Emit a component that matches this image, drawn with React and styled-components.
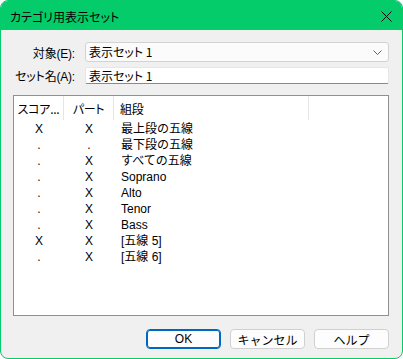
import React from "react";
import styled, { createGlobalStyle } from "styled-components";

const Global = createGlobalStyle`
  html, body { margin: 0; padding: 0; background: #ffffff; }
  body {
    font-family: "Liberation Sans", "Noto Sans CJK JP", sans-serif;
    font-size: 12px;
    color: #000;
  }
  * { box-sizing: border-box; }
`;

const GREEN = "#05cc6b";

const Window = styled.div`
  width: 403px;
  height: 359px;
  border: 1px solid ${GREEN};
  border-radius: 8px;
  overflow: hidden;
  display: flex;
  flex-direction: column;
  background: #f0f0f0;
`;

const TitleBar = styled.div`
  height: 29px;
  flex: none;
  background: ${GREEN};
  display: flex;
  align-items: center;
  justify-content: space-between;
  padding: 0 9px 0 9px;
  font-family: "Noto Sans CJK JP", sans-serif;
  font-feature-settings: "palt";
  font-size: 12px;
  color: #000;
`;

const Title = styled.span`
  margin-top: 1px;
`;

const CloseIcon = styled.svg`
  width: 11px;
  height: 11px;
  margin-right: 1px;
  margin-top: 1px;
`;

const Body = styled.div`
  flex: 1;
  display: flex;
  flex-direction: column;
  padding: 12px 13px 11px 12px;
`;

const Form = styled.div`
  display: grid;
  grid-template-columns: 61px 1fr;
  column-gap: 10px;
  row-gap: 5px;
  align-items: center;
  margin-left: 1px;
`;

const Label = styled.label`
  text-align: right;
  white-space: nowrap;
  font-family: "Liberation Sans", "Noto Sans CJK JP", sans-serif;
  font-feature-settings: "palt";
  letter-spacing: -0.2px;
`;

const Combo = styled.div`
  height: 20px;
  border: 1px solid #d2d2d2;
  border-radius: 3px;
  background: #fbfbfb;
  display: flex;
  align-items: center;
  justify-content: space-between;
  padding: 0 6px 0 3px;
`;

const FieldText = styled.span`
  font-family: "Noto Sans CJK JP", sans-serif;
  font-feature-settings: "palt";
  font-size: 12px;
  line-height: 1;
`;

const Edit = styled.div`
  height: 17px;
  border: 1px solid #e6e6e6;
  border-bottom-color: #8a8a8a;
  border-radius: 2px;
  background: #ffffff;
  display: flex;
  align-items: center;
  padding: 0 3px;
`;

const List = styled.div`
  margin-top: 11px;
  height: 221px;
  border: 1px solid #8f9090;
  background: #ffffff;
  display: flex;
  flex-direction: column;
  margin-right: 0;
`;

const cols = "50px 50px 195px 1fr";

const HeaderRow = styled.div`
  display: grid;
  grid-template-columns: ${cols};
  height: 24px;
  flex: none;
`;

const HeaderCell = styled.div`
  display: flex;
  align-items: center;
  justify-content: ${(p) => (p.$center ? "center" : "flex-start")};
  padding-left: ${(p) => (p.$center ? "0" : "6px")};
  border-right: ${(p) => (p.$last ? "none" : "1px solid #e5e5e5")};
  white-space: nowrap;
  overflow: hidden;
  font-family: "Noto Sans CJK JP", sans-serif;
  font-feature-settings: "palt";
  letter-spacing: -0.3px;
`;

const Rows = styled.div`
  padding-top: 1px;
  display: flex;
  flex-direction: column;
`;

const Row = styled.div`
  display: grid;
  grid-template-columns: ${cols};
  height: 16px;
  align-items: center;
`;

const Cell = styled.div`
  text-align: ${(p) => (p.$center ? "center" : "left")};
  padding-left: ${(p) => (p.$center ? "0" : "7px")};
  white-space: nowrap;
  line-height: 16px;
  font-family: "Liberation Sans", "Noto Sans CJK JP", sans-serif;
`;

const ButtonBar = styled.div`
  margin-top: 13px;
  display: flex;
  justify-content: flex-end;
  gap: 9px;
  margin-right: 0;
`;

const Button = styled.button`
  width: 75px;
  height: 20px;
  border-radius: 4px;
  border: 1px solid ${(p) => (p.$default ? "#0067c0" : "#d0d0d0")};
  box-shadow: ${(p) => (p.$default ? "inset 0 0 0 1px #0067c0" : "none")};
  background: #fdfdfd;
  font-family: "Liberation Sans", "Noto Sans CJK JP", sans-serif;
  font-size: 12px;
  color: #000;
  padding: 0;
  display: flex;
  align-items: center;
  justify-content: center;
`;

const rows = [
  ["X", "X", "最上段の五線"],
  [".", ".", "最下段の五線"],
  [".", "X", "すべての五線"],
  [".", "X", "Soprano"],
  [".", "X", "Alto"],
  [".", "X", "Tenor"],
  [".", "X", "Bass"],
  ["X", "X", "[五線 5]"],
  [".", "X", "[五線 6]"],
];

export default function App() {
  return (
    <>
      <Global />
      <Window>
        <TitleBar>
          <Title>カテゴリ用表示セット</Title>
          <CloseIcon viewBox="0 0 11 11">
            <path d="M0.5 0.5 L10.5 10.5 M10.5 0.5 L0.5 10.5" stroke="#000" strokeWidth="1" fill="none" />
          </CloseIcon>
        </TitleBar>
        <Body>
          <Form>
            <Label>対象(E):</Label>
            <Combo>
              <FieldText>表示セット 1</FieldText>
              <svg width="9" height="5" viewBox="0 0 9 5">
                <path d="M0.5 0.5 L4.5 4.5 L8.5 0.5" stroke="#606060" strokeWidth="1" fill="none" />
              </svg>
            </Combo>
            <Label>セット名(A):</Label>
            <Edit>
              <FieldText>表示セット 1</FieldText>
            </Edit>
          </Form>
          <List>
            <HeaderRow>
              <HeaderCell $center>スコア...</HeaderCell>
              <HeaderCell $center>パート</HeaderCell>
              <HeaderCell>組段</HeaderCell>
              <HeaderCell $last />
            </HeaderRow>
            <Rows>
              {rows.map((r, i) => (
                <Row key={i}>
                  <Cell $center>{r[0]}</Cell>
                  <Cell $center>{r[1]}</Cell>
                  <Cell>{r[2]}</Cell>
                  <Cell />
                </Row>
              ))}
            </Rows>
          </List>
          <ButtonBar>
            <Button $default>OK</Button>
            <Button>キャンセル</Button>
            <Button>ヘルプ</Button>
          </ButtonBar>
        </Body>
      </Window>
    </>
  );
}
